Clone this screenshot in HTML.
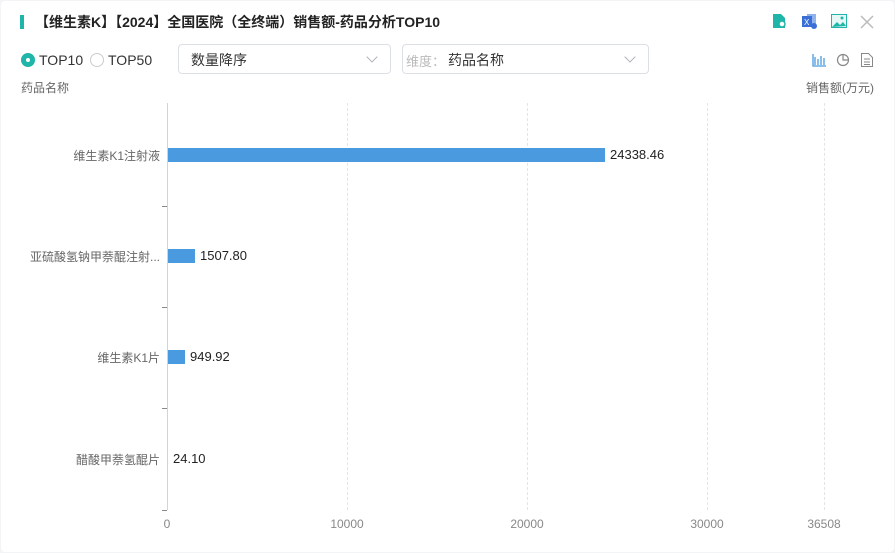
<!DOCTYPE html>
<html><head><meta charset="utf-8"><style>
*{margin:0;padding:0;box-sizing:border-box}
body{width:895px;height:553px;background:#f3f4f6;font-family:"Liberation Sans","Noto Sans CJK SC",sans-serif;overflow:hidden;position:relative}
.card{position:absolute;left:1px;top:1px;width:893px;height:551px;background:#fff;border-radius:4px}
.a{position:absolute;white-space:nowrap}
.sel{position:absolute;top:44px;height:30px;border:1px solid #dcdfe6;border-radius:4px;background:#fff}
.chev{position:absolute;right:14px;top:8px;width:8px;height:8px;border-right:1px solid #b0b3b8;border-bottom:1px solid #b0b3b8;transform:rotate(45deg)}
.lbl{font-size:12px;color:#666;text-align:right;width:150px;left:10px}
.val{font-size:13px;color:#222}
.bar{position:absolute;left:168px;height:14px;background:#4a9ae0}
.grid{position:absolute;top:103px;height:407px;border-left:1px dashed #e4e4e4}
.xt{position:absolute;top:517px;font-size:12px;color:#888;transform:translateX(-50%)}
.tick{position:absolute;left:162px;width:5px;border-top:1px solid #888}
</style></head><body><div class="card"></div>
<div class="a" style="left:20px;top:15px;width:4px;height:14px;background:#1fb5a8"></div>
<div class="a" style="left:35px;top:12px;font-size:14px;font-weight:bold;color:#222">【维生素K】【2024】全国医院（全终端）销售额-药品分析TOP10</div>
<svg class="a" style="left:771px;top:13px" width="16" height="16"><path d="M2 1h8l4 4v10H2z" fill="#1fb5a8"/><circle cx="11" cy="11" r="3" fill="#fff" stroke="#1fb5a8" stroke-width="1.5"/></svg>
<svg class="a" style="left:801px;top:13px" width="17" height="17"><rect x="6" y="1" width="9" height="13" fill="#8fb3ea"/><rect x="1" y="3" width="10" height="11" fill="#3b6fd6"/><text x="3" y="12" font-size="8" fill="#fff" font-family="Liberation Sans">X</text><circle cx="13" cy="13" r="3" fill="#3b6fd6"/></svg>
<svg class="a" style="left:831px;top:14px" width="16" height="14"><rect x="0.5" y="0.5" width="15" height="13" fill="#e6f7f5" stroke="#1fb5a8"/><path d="M1 13l5-5 3 3 3-3 3 4z" fill="#1fb5a8"/><circle cx="11" cy="4" r="1.5" fill="#1fb5a8"/></svg>
<svg class="a" style="left:860px;top:15px" width="14" height="14"><path d="M1 1l12 12M13 1L1 13" stroke="#bbb" stroke-width="1.5"/></svg>
<div class="a" style="left:21px;top:53px;width:14px;height:14px;border-radius:50%;background:#1fb5a8"></div>
<div class="a" style="left:26px;top:58px;width:4px;height:4px;border-radius:50%;background:#fff"></div>
<div class="a" style="left:39px;top:52px;font-size:14px;color:#333">TOP10</div>
<div class="a" style="left:90px;top:53px;width:14px;height:14px;border-radius:50%;border:1px solid #ccc"></div>
<div class="a" style="left:108px;top:52px;font-size:14px;color:#333">TOP50</div>
<div class="sel" style="left:178px;width:213px"><span class="a" style="left:12px;top:5px;font-size:14px;color:#333">数量降序</span><div class="chev"></div></div>
<div class="sel" style="left:402px;width:247px"><span class="a" style="left:3px;top:6px;font-size:13px;color:#bbb">维度：</span><span class="a" style="left:45px;top:5px;font-size:14px;color:#333">药品名称</span><div class="chev"></div></div>
<svg class="a" style="left:812px;top:53px" width="14" height="14"><path d="M1 1v12h13M3 4v8M6 6v6M9 3v9M12 5v7" stroke="#4a9ae0" stroke-width="1.3" fill="none"/></svg>
<svg class="a" style="left:836px;top:53px" width="14" height="14"><circle cx="7" cy="7" r="5.5" fill="none" stroke="#888" stroke-width="1.2"/><path d="M7 1.5V7h5.5" stroke="#888" stroke-width="1.2" fill="none"/></svg>
<svg class="a" style="left:861px;top:53px" width="12" height="14"><path d="M0.5 0.5h7l4 4v9h-11z M3 6h6M3 9h6M3 11.5h6" stroke="#888" stroke-width="1" fill="none"/></svg>
<div class="a" style="left:21px;top:79px;font-size:12px;color:#666">药品名称</div>
<div class="a" style="left:806px;top:79px;font-size:12px;color:#666">销售额(万元)</div>
<div class="grid" style="left:347px"></div><div class="grid" style="left:527px"></div><div class="grid" style="left:707px"></div><div class="grid" style="left:824px"></div>
<div class="a" style="left:167px;top:103px;height:407px;border-left:1px solid #ccd6e0"></div>
<div class="tick" style="top:206px"></div><div class="tick" style="top:307px"></div><div class="tick" style="top:408px"></div><div class="tick" style="top:510px"></div>
<div class="bar" style="top:148px;width:437px"></div>
<div class="bar" style="top:249px;width:27px"></div>
<div class="bar" style="top:350px;width:17px"></div>
<div class="a lbl" style="top:147px">维生素K1注射液</div><div class="a val" style="left:610px;top:147px">24338.46</div>
<div class="a lbl" style="top:248px">亚硫酸氢钠甲萘醌注射...</div><div class="a val" style="left:200px;top:248px">1507.80</div>
<div class="a lbl" style="top:349px">维生素K1片</div><div class="a val" style="left:190px;top:349px">949.92</div>
<div class="a lbl" style="top:451px">醋酸甲萘氢醌片</div><div class="a val" style="left:173px;top:451px">24.10</div>
<div class="xt" style="left:167px">0</div><div class="xt" style="left:347px">10000</div><div class="xt" style="left:527px">20000</div><div class="xt" style="left:707px">30000</div><div class="xt" style="left:824px">36508</div>
</body></html>
